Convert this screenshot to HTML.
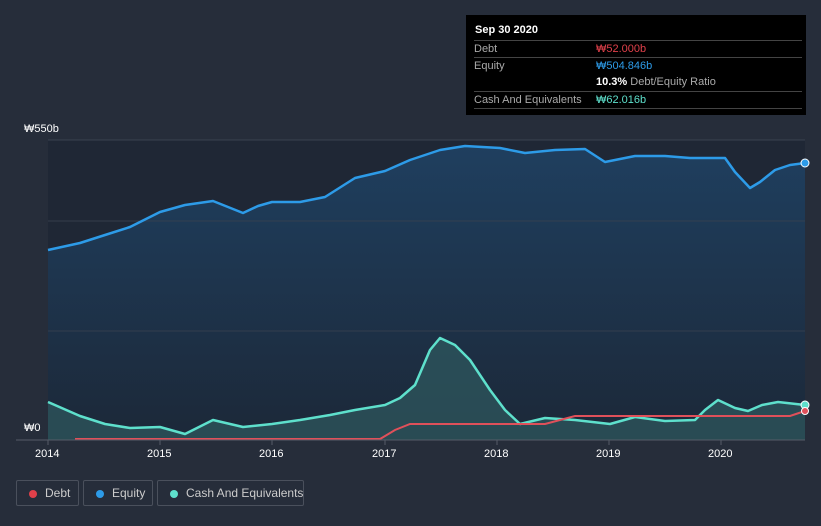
<!DOCTYPE html><html><head><meta charset="utf-8"><style>
body{margin:0;width:821px;height:526px;background:#262d3a;font-family:"Liberation Sans",sans-serif;overflow:hidden;position:relative}
.t{position:absolute;color:#fff;font-size:11px}
.tip{position:absolute;left:466px;top:15px;width:340px;height:100px;background:#000;font-size:11px}
.row{position:absolute;left:8px;width:328px;border-top:1px solid #444;color:#aaa;height:17px;line-height:17px}
.lg{position:absolute;top:480px;height:26px;border:1px solid #4a505c;border-radius:2px;color:#ccc;font-size:12px;line-height:25px;box-sizing:border-box;white-space:nowrap}
.lg i{position:absolute;left:12px;top:9px;width:8px;height:8px;border-radius:50%}
</style></head><body>
<svg width="821" height="526" style="position:absolute;left:0;top:0">
<defs><linearGradient id="g" x1="0" y1="0" x2="0" y2="1"><stop offset="0" stop-color="#1f3f5f"/><stop offset="1" stop-color="#1c2838"/></linearGradient></defs>
<rect x="48" y="140" width="757" height="300" fill="#1f2735"/>
<path d="M48,250 L80,243 105,235 130,227 160,212 185,205 213,201 228,207 243,213 258,206 272,202 300,202 325,197 355,178 385,171 410,160 440,150 465,146 500,148 525,153 555,150 585,149 605,162 635,156 665,156 690,158 725,158 735,172 750,188 760,182 775,170 790,165 805,163 L805,440 48,440Z" fill="url(#g)"/>
<path d="M48,402 L80,416 105,424 130,428 160,427 185,434 213,420 243,427 272,424 300,420 330,415 355,410 385,405 400,398 415,385 430,350 440,338 455,345 470,360 490,390 505,410 520,424 545,418 575,420 610,424 635,417 665,421 695,420 705,410 718,400 735,408 748,411 762,405 778,402 805,405 L805,440 48,440Z" fill="#2f5a60" opacity="0.7"/>
<line x1="48" y1="140" x2="805" y2="140" stroke="#3a4250"/>
<line x1="48" y1="221" x2="805" y2="221" stroke="#3a4250" opacity="0.8"/>
<line x1="48" y1="331" x2="805" y2="331" stroke="#3a4250" opacity="0.8"/>
<path d="M48,250 L80,243 105,235 130,227 160,212 185,205 213,201 228,207 243,213 258,206 272,202 300,202 325,197 355,178 385,171 410,160 440,150 465,146 500,148 525,153 555,150 585,149 605,162 635,156 665,156 690,158 725,158 735,172 750,188 760,182 775,170 790,165 805,163" fill="none" stroke="#2d9be8" stroke-width="2.5" stroke-linejoin="round"/>
<path d="M48,402 L80,416 105,424 130,428 160,427 185,434 213,420 243,427 272,424 300,420 330,415 355,410 385,405 400,398 415,385 430,350 440,338 455,345 470,360 490,390 505,410 520,424 545,418 575,420 610,424 635,417 665,421 695,420 705,410 718,400 735,408 748,411 762,405 778,402 805,405" fill="none" stroke="#5ee0cc" stroke-width="2.5" stroke-linejoin="round"/>
<path d="M75,439 L340,439 380,439 395,430 410,424 545,424 575,416 790,416 805,411" fill="none" stroke="#e0505a" stroke-width="2"/>
<line x1="16" y1="440" x2="805" y2="440" stroke="#555c68"/>
<g stroke="#555c68"><line x1="48" y1="440" x2="48" y2="445"/><line x1="160" y1="440" x2="160" y2="445"/><line x1="272" y1="440" x2="272" y2="445"/><line x1="385" y1="440" x2="385" y2="445"/><line x1="497" y1="440" x2="497" y2="445"/><line x1="609" y1="440" x2="609" y2="445"/><line x1="721" y1="440" x2="721" y2="445"/></g>
<circle cx="805" cy="163" r="4" fill="#2d9be8" stroke="#fff" stroke-width="1"/>
<circle cx="805" cy="405" r="4" fill="#5ee0cc" stroke="#fff" stroke-width="1"/>
<circle cx="805" cy="411" r="3.5" fill="#e0505a" stroke="#fff" stroke-width="1"/>
</svg>
<div class="t" style="left:24px;top:123px">₩550b</div>
<div class="t" style="left:24px;top:422px">₩0</div>
<div class="t" style="left:35px;top:448px">2014</div><div class="t" style="left:147px;top:448px">2015</div><div class="t" style="left:259px;top:448px">2016</div><div class="t" style="left:372px;top:448px">2017</div><div class="t" style="left:484px;top:448px">2018</div><div class="t" style="left:596px;top:448px">2019</div><div class="t" style="left:708px;top:448px">2020</div>
<div class="tip">
<div style="position:absolute;left:9px;top:9px;color:#fff;font-weight:bold">Sep 30 2020</div>
<div class="row" style="top:25px">Debt<span style="position:absolute;left:122px;color:#e0404a">₩52.000b</span></div>
<div class="row" style="top:42px">Equity<span style="position:absolute;left:122px;color:#2d9be8">₩504.846b</span></div>
<div class="row" style="top:59px;border-top:none"><span style="position:absolute;left:122px"><b style="color:#fff">10.3%</b> Debt/Equity Ratio</span></div>
<div class="row" style="top:76px">Cash And Equivalents<span style="position:absolute;left:122px;color:#5ee0cc">₩62.016b</span></div>
<div class="row" style="top:93px;height:0"></div>
</div>
<div class="lg" style="left:16px;width:63px;padding-left:28px"><i style="background:#e0404a"></i>Debt</div>
<div class="lg" style="left:83px;width:70px;padding-left:28px"><i style="background:#2d9be8"></i>Equity</div>
<div class="lg" style="left:157px;width:147px;padding-left:28px"><i style="background:#5ee0cc"></i>Cash And Equivalents</div>
</body></html>
